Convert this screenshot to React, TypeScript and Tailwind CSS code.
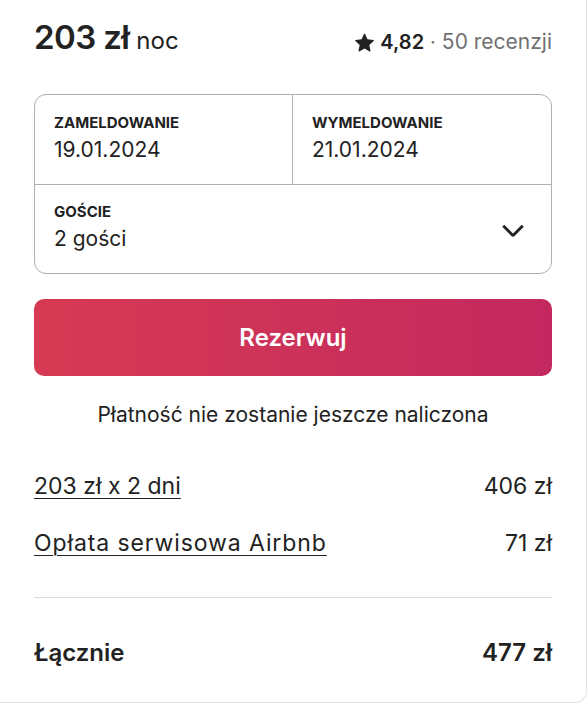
import React from "react";

function Star() {
  return (
    <svg viewBox="0 0 32 32" className="h-[19px] w-[19px] fill-[#222222]" aria-hidden="true">
      <path d="M15.1 1.58l-4.13 8.88-9.86 1.27a1 1 0 0 0-.54 1.74l7.3 6.57-1.97 9.85a1 1 0 0 0 1.48 1.06l8.62-5 8.63 5a1 1 0 0 0 1.48-1.06l-1.97-9.85 7.3-6.57a1 1 0 0 0-.55-1.73l-9.86-1.28-4.12-8.88a1 1 0 0 0-1.82 0z" />
    </svg>
  );
}

function Chevron() {
  return (
    <svg
      viewBox="0 0 32 32"
      className="h-[26px] w-[26px] fill-none stroke-[#222222]"
      strokeWidth={3.6}
      aria-hidden="true"
    >
      <path d="M28 12 16.7 23.3a1 1 0 0 1-1.4 0L4 12" />
    </svg>
  );
}

function PriceRow({ label, value, wide }: { label: string; value: string; wide?: boolean }) {
  return (
    <div className="flex h-[28px] items-center justify-between text-[23px] leading-[28px] text-[#222222]">
      <span className={wide ? "underline underline-offset-[4px] decoration-1 tracking-[0.9px]" : "underline underline-offset-[4px] decoration-1"}>
        {label}
      </span>
      <span>{value}</span>
    </div>
  );
}

export default function App() {
  return (
    <div className="h-[704px] w-[588px] overflow-hidden bg-white font-['Inter',sans-serif] text-[#222222]">
      <div className="h-[703px] w-[587px] rounded-br-xl border-r border-b border-[#e4e4e4] px-[34px] pt-[17px]">
        {/* header */}
        <div className="flex h-[40px] items-baseline justify-between leading-[40px]">
          <div className="flex items-baseline gap-[7px]">
            <span className="text-[33px] font-semibold tracking-[-0.6px]">203 zł</span>
            <span className="text-[24px]">noc</span>
          </div>
          <div className="flex items-baseline gap-[6px] text-[20px]">
            <span className="self-center">
              <Star />
            </span>
            <span className="font-semibold">4,82</span>
            <span className="text-[#717171]">·</span>
            <span className="text-[21px] text-[#717171]">50 recenzji</span>
          </div>
        </div>

        {/* picker */}
        <div className="mt-[37px] overflow-hidden rounded-[12px] border border-[#b0b0b0]">
          <div className="grid grid-cols-2 border-b border-[#b0b0b0]">
            <div className="h-[89px] border-r border-[#b0b0b0] px-[19px] pt-[19px]">
              <div className="text-[15px] font-bold uppercase leading-[18px]">Zameldowanie</div>
              <div className="mt-[5px] text-[21px] leading-[26px]">19.01.2024</div>
            </div>
            <div className="h-[89px] px-[19px] pt-[19px]">
              <div className="text-[15px] font-bold uppercase leading-[18px]">Wymeldowanie</div>
              <div className="mt-[5px] text-[21px] leading-[26px]">21.01.2024</div>
            </div>
          </div>
          <div className="flex h-[88px] justify-between pl-[19px] pr-[25px] pt-[18px]">
            <div>
              <div className="text-[15px] font-bold uppercase leading-[18px]">Goście</div>
              <div className="mt-[5px] text-[21px] leading-[26px]">2 gości</div>
            </div>
            <div className="-mt-[18px] self-center">
              <Chevron />
            </div>
          </div>
        </div>

        {/* button */}
        <button className="mt-[25px] flex h-[77px] w-full items-center justify-center rounded-[10px] bg-gradient-to-r from-[#d63a53] to-[#c3285f] text-[24px] font-semibold text-white">
          Rezerwuj
        </button>

        <p className="mt-[26px] text-center text-[21px] leading-[26px]">Płatność nie zostanie jeszcze naliczona</p>

        {/* breakdown */}
        <div className="mt-[44px] flex flex-col gap-[29px]">
          <PriceRow label="203 zł x 2 dni" value="406 zł" />
          <PriceRow label="Opłata serwisowa Airbnb" value="71 zł" wide />
        </div>

        <div className="mt-[40px] border-t border-[#dddddd]" />

        <div className="mt-[41px] flex h-[28px] items-center justify-between text-[24px] font-semibold leading-[28px]">
          <span>Łącznie</span>
          <span>477 zł</span>
        </div>
      </div>
    </div>
  );
}
